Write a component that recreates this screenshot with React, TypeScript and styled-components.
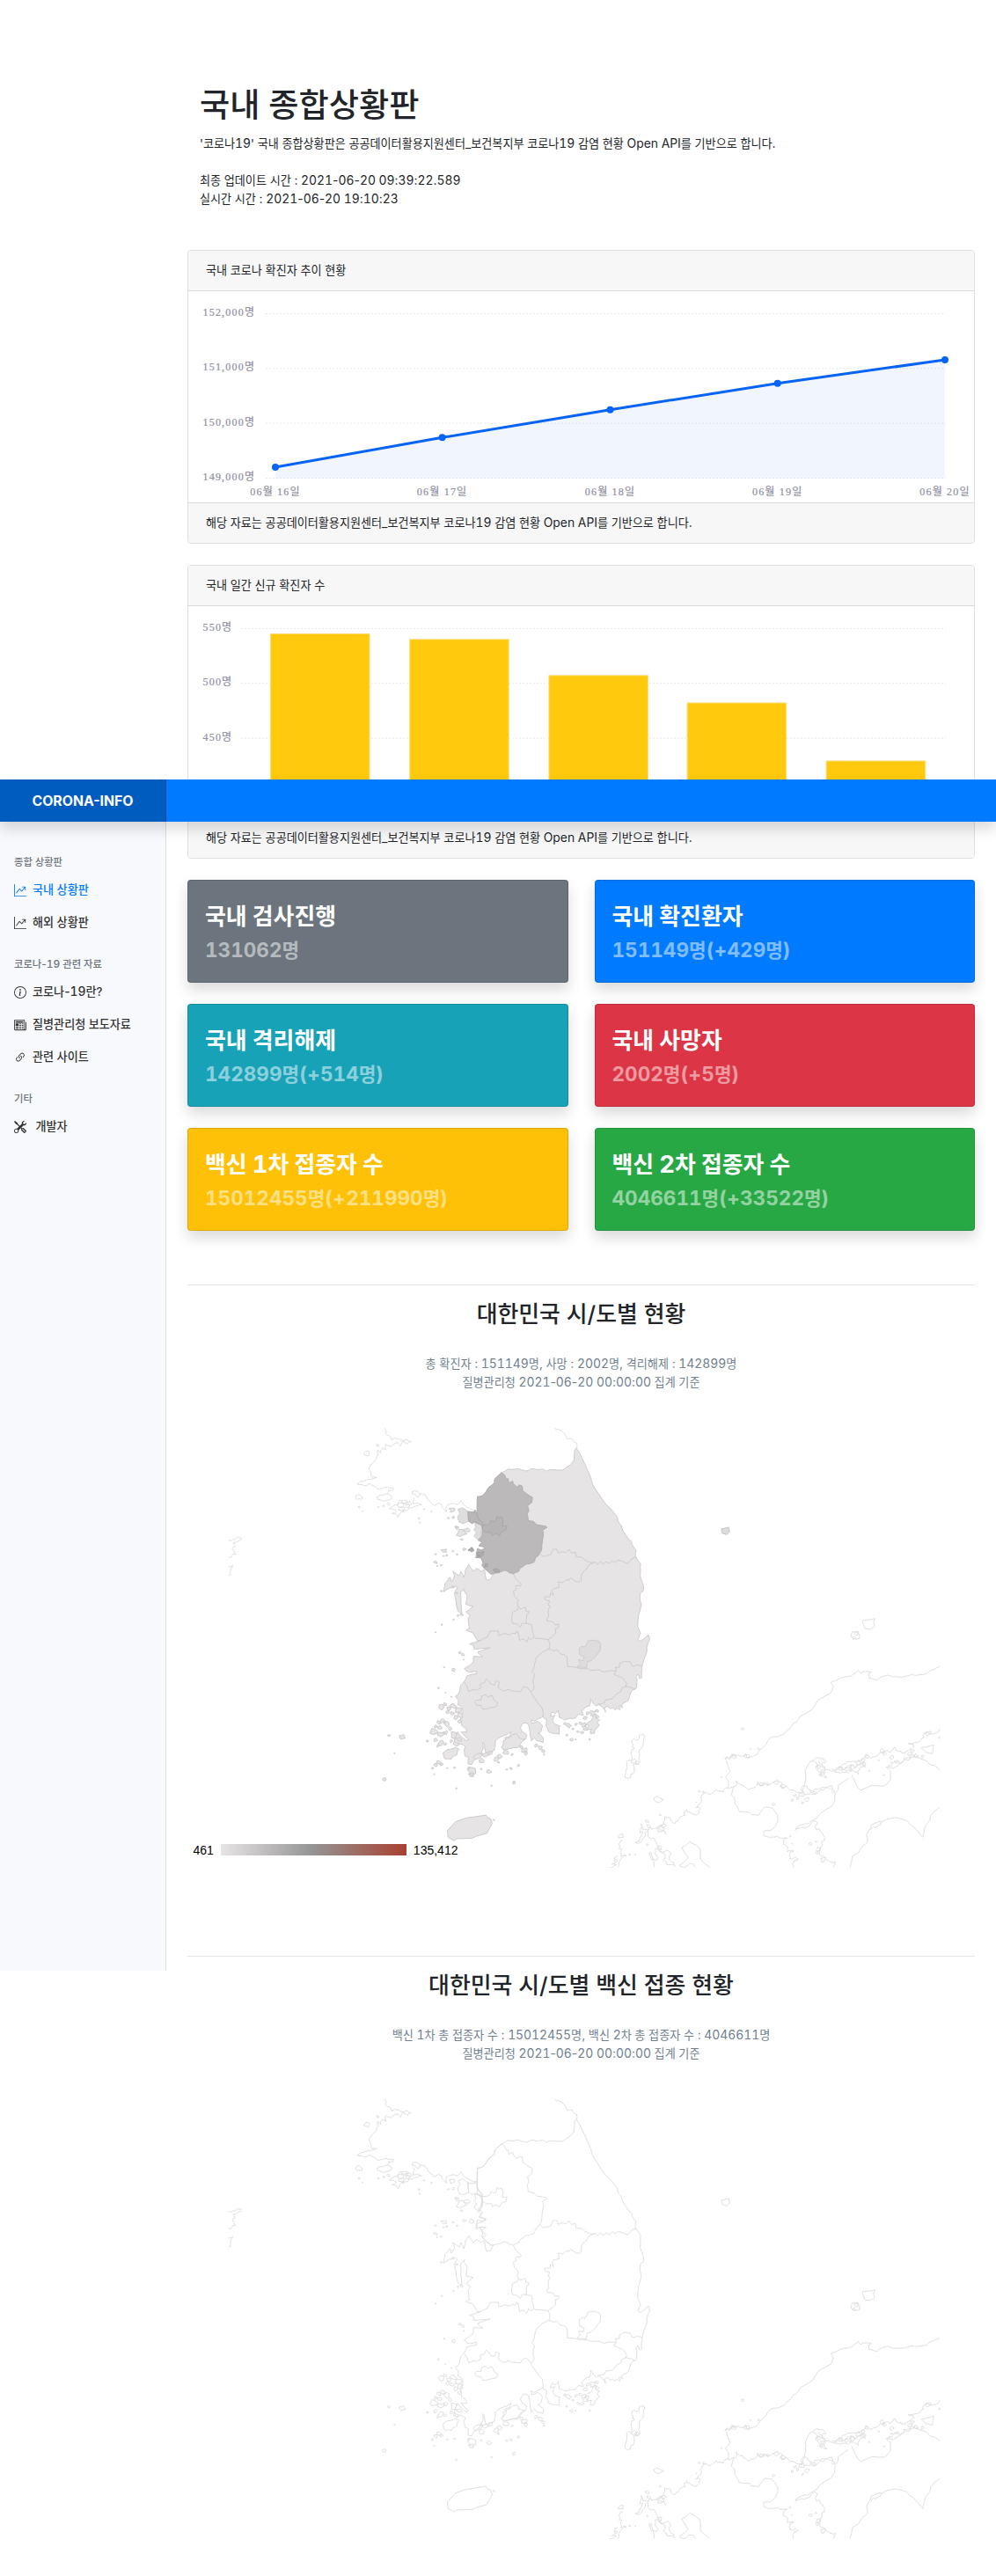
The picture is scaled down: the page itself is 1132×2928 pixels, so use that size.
import React from "react";
import styled, { createGlobalStyle } from "styled-components";
import { BsGraphUpArrow, BsInfoCircle, BsNewspaper, BsLink45Deg, BsTools } from "react-icons/bs";

const sans = `Inter, "Noto Sans CJK KR", sans-serif`;
const serif = `"Liberation Serif", "Noto Sans CJK KR", serif`;

const Global = createGlobalStyle`
  * { box-sizing: border-box; }
  body { margin: 0; background: #fff; color: #212529; font-family: ${sans}; font-size: 13.1px; line-height: 21px; }
`;

const Page = styled.div`
  position: relative;
  display: grid;
  grid-template-columns: 189px 1fr;
  height: 2928px;
  overflow: hidden;
`;

const NavBar = styled.header`
  position: absolute;
  top: 886px;
  left: 0;
  right: 0;
  height: 48px;
  display: flex;
  background: #007bff;
  box-shadow: 0 8px 16px rgba(0, 0, 0, 0.15);
`;
const Brand = styled.div`
  width: 189px;
  display: flex;
  align-items: center;
  justify-content: center;
  background: #005cbf;
  border-right: 1px solid #00458f;
  color: #fff;
  font-size: 15.8px;
  font-weight: 700;
`;

const SideBar = styled.aside`
  margin-top: 886px;
  height: 1354px;
  padding: 84px 0 0 16px;
  background: #f8f9fc;
  border-right: 1px solid #dcdddf;
`;
const SideGroup = styled.div`
  display: flex;
  flex-direction: column;
  margin-bottom: 19.5px;
`;
const SideTitle = styled.div`
  height: 22.5px;
  font-size: 11.3px;
  font-weight: 500;
  color: #6c757d;
`;
const SideItem = styled.a<{ $active?: boolean; $gap?: number }>`
  display: flex;
  align-items: center;
  gap: ${(p) => p.$gap ?? 7}px;
  height: 37px;
  color: ${(p) => (p.$active ? "#007bff" : "#333")};
  font-weight: 500;
  svg { width: 14px; height: 14px; position: relative; top: 1px; }
`;

const Latin = styled.span<{ $digits?: boolean }>`
  font-size: 1.06em;
  line-height: 1;
  font-variant-numeric: ${(p) => (p.$digits ? "tabular-nums" : "normal")};
`;

const Main = styled.main`
  padding: 98px 24px 0;
`;
const Intro = styled.section`
  height: 186px;
  padding-left: 14px;
`;
const Title = styled.h1`
  margin: 0 0 10.5px;
  font-size: 37.2px;
  line-height: 44px;
  font-weight: 500;
`;
const Text = styled.p`
  margin: 0;
`;
const Card = styled.section`
  height: 334px;
  margin-bottom: 24px;
  border: 1px solid #dfdfdf;
  border-radius: 4px;
  overflow: hidden;
`;
const Bar = styled.div<{ $foot?: boolean }>`
  height: 46px;
  padding: 0 20px;
  display: flex;
  align-items: center;
  background: #f7f7f7;
  border: 0 solid #dadada;
  border-width: ${(p) => (p.$foot ? "1px 0 0" : "0 0 1px")};
`;
const Chart = styled.svg`
  display: block;
  width: 893px;
  height: 240px;
  text {
    font: 400 12px ${serif};
    fill: #8f8fa3;
    stroke: #8f8fa3;
    stroke-width: 0.2px;
    letter-spacing: 1.2px;
  }
`;

const Stats = styled.section`
  display: grid;
  grid-template-columns: 1fr 1fr;
  gap: 24px 30px;
`;
const Stat = styled.article<{ $bg: string }>`
  height: 117px;
  padding: 22px 19px;
  background: ${(p) => p.$bg};
  border: 1px solid rgba(0, 0, 0, 0.125);
  border-radius: 4px;
  box-shadow: 0 8px 16px rgba(0, 0, 0, 0.15);
  font-weight: 700;
`;
const StatName = styled.div`
  font-size: 25.9px;
  line-height: 38px;
  color: #fff;
`;
const StatValue = styled.div`
  font-size: 21.3px;
  line-height: 38px;
  color: rgba(255, 255, 255, 0.5);
`;

const Region = styled.section`
  height: 763px;
  padding-top: 17px;
  border-top: 1px solid #e5e5e5;
  text-align: center;
`;
const Regions = styled.div`
  margin-top: 61px;
`;
const RegionTitle = styled.h2`
  margin: 0 0 30.5px;
  font-size: 25.9px;
  line-height: 31px;
  font-weight: 500;
`;
const Muted = styled.p`
  margin: 0;
  color: #708090;
`;
const MapBox = styled.div`
  position: relative;
  height: 500px;
  margin-top: 41px;
  padding-left: 45.5px;
`;
const MapSvg = styled.svg`
  display: block;
`;
const Legend = styled.div`
  position: absolute;
  left: 6.5px;
  bottom: 10px;
  display: flex;
  align-items: center;
  gap: 8px;
  font: 14px/20px "Liberation Sans", sans-serif;
  color: #000;
`;
const Ramp = styled.div`
  width: 211px;
  height: 13px;
  background: linear-gradient(90deg, #e7e4e6, #949393 50%, #a94131);
`;

/* Latin letters and digits are set a little larger than the Hangul around them. */
const mix = (text: string) =>
  text
    .split(/(\d+|[A-Za-z()+:,._\-]+)/)
    .map((part, i) => (i % 2 ? <Latin key={i} $digits={/\d/.test(part)}>{part}</Latin> : part));

type Pt = [number, number];

const parse = (s: string): Pt[] =>
  s.trim().split(/\s+/).map((p) => p.split(",").map(Number) as Pt);

const noise = (n: number) => {
  const v = Math.sin(n * 127.1 + 11.7) * 43758.5453;
  return v - Math.floor(v) - 0.5;
};

/* Subdivides a coastline and shifts each midpoint sideways, so it looks eroded. */
const line = (s: string, amp = 0, close = false) => {
  let pts = parse(s);
  if (close) pts.push(pts[0]);
  for (let round = 0; amp > 0 && round < 2; round++) {
    const out: Pt[] = [pts[0]];
    for (let i = 1; i < pts.length; i++) {
      const [x0, y0] = pts[i - 1];
      const [x1, y1] = pts[i];
      const len = Math.hypot(x1 - x0, y1 - y0) || 1;
      const d = noise(x0 + y1 * 3 + round) * Math.min(amp, len * 0.8);
      out.push([(x0 + x1) / 2 - ((y1 - y0) / len) * d, (y0 + y1) / 2 + ((x1 - x0) / len) * d]);
      out.push([x1, y1]);
    }
    pts = out;
    amp /= 2;
  }
  return "M" + pts.map(([x, y]) => `${x.toFixed(1)} ${y.toFixed(1)}`).join("L") + (close ? "Z" : "");
};

const isles = (s: string) =>
  s.trim().split(/\s+/).map((item) => {
    const [x, y, r] = item.split(",").map(Number);
    const n = r > 5 ? 9 : 6;
    return (
      "M" +
      Array.from({ length: n }, (_, i) => {
        const a = (i / n) * Math.PI * 2;
        const q = r * (1 + noise(x * 3 + y + i * 7) * 0.9);
        return `${(x + Math.cos(a) * q).toFixed(1)} ${(y + Math.sin(a) * q * 0.85).toFixed(1)}`;
      }).join("L") +
      "Z"
    );
  }).join("");

const mainland = `1272,133 1283,150 1320,235 1325,254 1366,318 1404,362 1406,375 1416,388 1420,404 1440,436 1447,440 1450,452 1463,470 1461,490 1477,515 1476,557 1486,587 1485,606 1477,610 1475,622 1480,650 1470,690 1468,724 1477,746 1468,765 1478,770 1502,750 1506,765 1497,790 1497,806 1482,853 1480,893 1473,893 1468,880 1462,890 1466,895 1465,925 1450,934 1446,940 1438,966 1415,982 1420,990 1408,985 1412,997 1400,990 1396,998 1388,990 1380,994 1370,985 1362,990 1365,1005 1358,990 1350,985 1345,978 1335,985 1325,975 1318,962 1315,985 1300,990 1290,1000 1296,1015 1280,1012 1270,1025 1250,1025 1235,1030 1218,1022 1215,998 1205,1010 1195,1005 1190,1020 1205,1015 1198,1032 1205,1045 1220,1050 1218,1077 1200,1076 1185,1070 1176,1050 1178,1030 1166,1020 1140,1035 1128,1030 1130,1042 1150,1035 1165,1050 1160,1070 1150,1075 1168,1090 1168,1105 1150,1100 1140,1090 1130,1100 1125,1070 1120,1045 1105,1040 1095,1055 1100,1070 1115,1080 1110,1095 1098,1100 1085,1120 1060,1125 1045,1130 1035,1120 1050,1100 1045,1090 1060,1085 1065,1070 1050,1080 1035,1085 1015,1100 1012,1130 985,1140 980,1110 975,1105 975,1130 965,1150 945,1165 940,1178 928,1175 930,1155 918,1150 915,1130 920,1118 905,1110 890,1115 885,1095 895,1070 905,1085 925,1100 930,1095 915,1080 905,1070 925,1070 918,1055 908,1050 905,1020 912,1000 905,985 895,980 898,965 888,952 900,940 905,915 915,905 925,885 955,878 955,870 930,873 916,862 945,840 947,820 975,822 958,808 998,792 947,797 944,783 933,780 965,770 955,765 945,745 922,735 932,730 928,695 935,685 922,675 945,655 922,650 925,620 915,605 918,597 905,610 905,640 908,680 895,670 890,640 885,610 895,595 885,592 870,595 850,608 855,580 870,560 875,575 885,555 880,540 900,555 905,540 915,560 920,535 930,517 945,540 955,530 970,540 980,535 988,570 998,568 1010,548 1000,548 980,530 972,522 985,515 970,500 985,490 955,490 958,478 985,465 965,455 975,440 960,430 970,415 975,400 965,385 957,378 958,345 958,294 975,290 995,262 1012,248 1014,234 1034,215 1055,203 1065,205 1090,202 1110,209 1130,202 1150,205 1165,202 1175,209 1190,204 1230,206 1250,192 1264,177 1267,140`;

const gyeonggi = `1034,215 1045,222 1050,235 1056,234 1058,248 1070,242 1073,252 1085,262 1090,255 1100,258 1103,275 1118,287 1132,295 1132,312 1118,322 1122,340 1116,352 1120,372 1135,375 1148,387 1175,391 1180,396 1165,405 1168,420 1164,445 1162,470 1152,488 1142,497 1138,510 1125,515 1110,518 1095,530 1090,540 1072,549 1060,545 1045,537 1030,543 1010,548 1000,549 980,531 972,518 975,512 968,492 953,496 958,465 970,470 985,462 962,456 972,445 960,438 972,425 975,400 972,385 957,362 958,294 975,290 995,262 1012,248 1014,234`;

const borders = [
  "1157,480 1165,491 1180,488 1190,487 1198,468 1210,467 1215,480 1230,475 1240,478 1250,468 1258,480 1270,478 1272,492 1288,493 1300,503 1318,512 1335,510 1340,518 1350,508 1358,517 1368,508 1378,515 1388,505 1396,512 1405,503 1420,507 1435,515 1448,500 1463,494",
  "1328,512 1310,522 1308,530 1290,548 1288,572 1275,576 1255,562 1250,570 1240,568 1230,577 1215,575 1218,593 1200,597 1195,605 1200,620 1190,612 1188,625 1172,625 1172,633 1187,638 1182,652 1190,655 1183,670 1185,690 1178,697 1180,705 1198,707 1205,717 1217,715 1215,727 1205,730 1207,745 1195,757 1183,765",
  "1072,549 1080,565 1097,582 1095,588 1080,588 1082,600 1072,605 1075,622 1088,635 1085,645 1088,658",
  "1088,658 1095,665 1110,658 1112,672 1122,673 1115,685 1113,712 1100,712 1095,725 1085,715 1070,712 1066,700 1070,675 1085,668 1088,658",
  "1113,712 1130,715 1132,735 1138,755 1130,765 1120,758 1115,773 1105,763 1092,768 1088,745 1085,740",
  "955,770 970,768 990,757 998,738 1025,737 1027,752 1045,745 1060,750 1068,744 1080,746 1082,738 1088,742",
  "1138,760 1150,762 1183,765 1189,780 1185,797 1165,807 1145,825 1140,845 1136,865 1130,870 1140,880 1135,905 1138,925 1130,938",
  "915,905 925,920 930,937 945,930 955,933 968,925 967,912 980,908 985,895 997,905 1000,913 1012,916 1018,900 1027,905 1025,925 1040,935 1058,930 1070,935 1095,937 1105,922 1118,925 1130,942 1137,955 1165,993 1167,1020",
  "1185,797 1200,803 1212,800 1222,812 1235,815 1243,825 1245,855 1270,857 1285,862 1308,862 1320,867 1345,865 1358,872 1380,868 1400,870",
  "1395,857 1410,857 1410,845 1425,837 1445,840 1450,853 1465,850 1482,853",
  "1398,857 1400,870 1392,880 1420,893 1433,912 1428,920 1450,925 1460,930",
  "1433,918 1418,925 1415,937 1400,945 1388,960 1365,965 1362,975 1340,980",
  "950,972 955,965 970,965 972,952 985,948 990,955 1005,950 1010,965 1022,972 1018,987 995,992 975,995 968,982 955,982 950,972",
];

const seoul = "972,387 985,388 998,382 1000,372 1012,377 1018,374 1020,358 1025,364 1035,360 1040,375 1037,390 1052,390 1048,405 1035,410 1028,423 1018,415 1005,422 1003,412 985,412 975,405";
const incheon = "928,343 948,345 950,338 957,352 962,368 974,378 975,390 950,378 940,383 930,375";
const ganghwa = "896,335 910,330 928,342 930,375 915,383 900,378 895,360 903,350";
const yeongjong = "950,378 968,384 972,395 970,425 962,437 948,425 955,412 946,403 953,396";
const daegu = "1275,857 1285,845 1280,832 1295,835 1298,822 1283,815 1282,795 1290,788 1300,790 1310,770 1330,767 1345,772 1350,780 1347,805 1335,820 1320,835 1308,838 1305,858";
const jeju = "862,1397 888,1367 920,1355 985,1345 990,1353 1000,1357 1005,1372 988,1405 953,1415 942,1421 890,1423 884,1430 865,1418";
const geoje = "1325,1018 1335,1010 1335,1025 1348,1030 1338,1040 1346,1048 1332,1062 1330,1075 1318,1076 1322,1062 1305,1060 1312,1048 1300,1050 1318,1035";
const jindo = "848,1140 870,1128 890,1120 900,1128 893,1145 875,1160 858,1160 850,1152";
const goheung = "1040,1100 1065,1085 1082,1075 1090,1090 1110,1095 1098,1105 1085,1122 1060,1125 1045,1130 1035,1120";

const westIsles = `878,337,8 882,362,4 890,395,4 866,364,3 908,416,13 925,405,8 908,435,4 895,398,5 938,468,8 916,467,5 852,472,7 880,474,3 893,484,3 860,488,3 825,484,3 850,490,3 825,510,5 842,520,3 830,522,2 843,606,3 893,612,3 880,592,4 908,684,4 896,686,3 882,700,2 845,716,2 825,741,2 902,808,4 912,815,5 914,832,2 883,866,6 852,857,2 833,926,3 856,941,2 875,955,2
842,988,8 855,980,6 868,992,7 882,986,8 895,998,9 878,1008,6 903,1015,8 862,1005,5 890,1022,8 902,1035,6 835,1040,7 848,1034,8 860,1045,8 825,1052,5 838,1055,6 820,1070,12 842,1078,9 858,1072,6 870,1060,6 798,1101,4 825,1097,6 842,1108,8 855,1110,5 832,1116,4 882,1080,10 900,1095,9 890,1110,8 875,1100,5
720,1086,8 677,1082,4 694,1140,2 661,1227,5 890,1257,3 815,1190,3 825,1180,5 835,1172,7 842,1178,5 820,1210,2 862,1190,2 885,1188,3 940,1200,14 938,1212,8 930,1190,3 995,1202,7 1003,1248,2 1075,1238,5 970,1193,3 1052,1195,3 1065,1190,5 1088,1180,4
960,1150,12 985,1145,9 970,1165,8 1000,1140,7 1018,1160,8 1030,1152,7 1048,1137,9 1025,1170,4 1068,1145,4 1105,1130,9 1112,1140,6 1098,1120,6 1145,1115,5 1158,1125,7 1168,1135,5 1170,1145,2
1235,1043,4 1248,1050,7 1262,1060,3 1272,1045,5 1285,1042,5 1296,1048,7 1302,1060,7 1278,1070,4 1292,1072,5 1256,1096,5 1242,1080,3 1270,1095,2 1315,1095,3 1300,1025,6 1325,1008,9 1338,1000,5 1308,1010,5 1338,1020,5 1010,1361,3`;

const northCoast = [
  "663,67 669,78 665,85 680,95 685,108 695,100 715,108 735,105 747,112 735,120 722,110 712,127 705,115 690,122 680,128 665,122 668,140 655,133 650,150 640,140 642,155 635,172 612,200 620,228 638,230 600,240 575,252 605,258 615,250 640,268 665,262 690,265 690,272 675,272 672,285 685,292 682,302 660,308 640,303 637,295 655,290 672,285",
  "750,278 765,276 777,288 770,296 750,285 750,278",
  "777,282 790,286 800,304 820,322 835,315 845,322 850,335 858,345 862,322 880,316 895,320 906,306 912,318 945,340 958,342",
  "757,297 752,318 770,316 780,322 762,325 750,330 740,328 735,340 720,345 722,335 705,362 698,352 685,350 700,340 678,335 690,325 705,322 712,305 730,318 740,308",
  "1203,67 1208,73 1222,75 1240,95 1245,105 1258,102 1275,118 1275,135",
];
const farWest = [
  "165,437 180,435 195,428 206,430 203,437 180,447 187,458 178,465 188,485 178,487 175,494 165,493",
  "165,525 180,520 173,535 172,553 166,553",
];
const northIsles = "607,153,9 640,125,4 580,296,9 582,328,3 592,342,2 642,328,3 660,325,3 675,318,4 715,320,9 725,310,7 718,335,8 735,325,7 742,316,6 788,335,2 812,343,2 772,366,3 774,379,2";

const japanSmooth = [
  "1103,643 1070,657 1055,668 1018,673 1010,670 970,679 945,678 925,672 900,680 888,690 862,682 860,668 870,662 845,660 832,665 825,656 815,665 800,675 770,680 750,690 732,697 740,710 732,732 688,757 667,790 627,813 613,835 605,835 593,853 580,862 572,873 555,881 530,883 515,897 513,905 492,925 480,942 465,950",
  "375,962 380,980 388,1000 372,1020 383,1035 383,1058",
  "1103,995 1085,980 1065,975 1060,965 1040,958 1015,950 990,955 975,970 945,990 920,985 935,1000 935,1028 915,1050 870,1048 833,1065 820,1050 803,1013",
  "790,1025 757,1047 755,1065 745,1080 743,1105 735,1118 700,1140 685,1158 660,1172",
  "797,1328 805,1290 825,1278 840,1255 858,1240 853,1215 868,1190",
  "905,1173 925,1163 955,1158 990,1168 1000,1180 1012,1187 1045,1225 1052,1190 1070,1165 1072,1150 1085,1135 1103,1122",
  "400,1052 392,1080 403,1090 405,1110 420,1137 455,1140 460,1147 485,1150 505,1122 530,1125 550,1150 550,1170 540,1190 523,1203 503,1203 503,1220 525,1225 550,1222 560,1228 583,1228",
  "215,1322 245,1295 223,1260 240,1250 250,1240 270,1250 285,1262 287,1300 305,1318 320,1328",
  "215,1322 232,1328 250,1315 262,1315 270,1328",
  "1040,920 1082,910 1078,940 1055,935 1040,920",
];
const japanRough = [
  "465,950 450,955 440,940 430,948 400,948 385,960 370,960 385,955 395,940 408,945",
  "383,1058 400,1052 408,1032 430,1045 450,1063 472,1055 482,1035 490,1050 505,1038 515,1048 550,1030 565,1040 558,1052 580,1050 610,1068 630,1078 640,1055 645,1020 650,985 680,955 705,957 712,970 700,985 720,995 745,1000 770,978 790,967 830,965 855,945 870,955 900,935 920,930 935,935 950,918 970,930 985,940 1000,925 1015,915 1010,905 995,905 1030,900 1048,885 1050,870 1070,872 1103,855",
  "660,1172 640,1180 610,1202 640,1193 670,1170 685,1180 682,1200 700,1208 712,1225 700,1240 695,1265 700,1290 715,1300 748,1310 740,1328",
  "868,1190 880,1178 905,1173 890,1188 868,1200",
  "583,1228 570,1250 585,1258 583,1275 605,1272 590,1290 600,1300 620,1300 600,1315 600,1328",
  "383,1058 365,1070 340,1062 325,1075 300,1073 290,1085 290,1105 270,1125 285,1125 280,1143 255,1143 240,1130 235,1150 215,1160 200,1178 185,1160 165,1155 160,1180 145,1190 150,1200 170,1217",
  "150,1190 130,1195 115,1193 105,1182 110,1200 95,1225 85,1240 65,1243 80,1225 90,1205 80,1210 83,1180 90,1198 115,1190",
  "108,1205 118,1230 135,1240 145,1260 150,1275 170,1270 185,1285 183,1305 200,1325 175,1320 160,1300 160,1280 135,1262 130,1280 140,1300 125,1300 120,1285 130,1328",
  "22,1235 10,1265 20,1265 15,1290 35,1288 15,1300 5,1328",
  "5,1290 -8,1305 5,1305 -15,1318 0,1320 -25,1328",
  "90,873 96,885 92,910 78,930 75,955 80,970 65,975 60,990 50,1010 38,1025 29,1018 35,968 50,965 52,930 62,920 53,905 60,890 78,888 80,875 90,873",
  "672,962 690,980 680,990 700,1005 695,1015 718,1020 705,1000 710,985 690,965",
  "735,992 760,985 775,995 800,980 820,985 840,970 850,985 830,990 825,1010 800,1000 780,1003 745,1003",
  "940,985 935,970 955,965 965,975 980,955 1000,960 1010,945 1030,950",
  "630,1060 650,1052 665,1065 660,1078 640,1078 630,1060",
  "660,1075 680,1060 700,1055 735,1050 738,1060 715,1055 690,1068 665,1078",
];
const japanIsles = `862,493,20 815,537,16 820,530,6 810,545,5 430,857,5 458,923,2 485,923,3 400,948,8 445,948,8 142,1097,14 283,1069,3 297,1070,3 358,1020,2 273,1105,2 535,1112,4 106,1170,6 15,1220,8 65,1284,2 45,1285,3 150,1148,3 60,967,8 70,970,6 150,1195,12 160,1185,8 148,1262,7 115,1280,5 105,1250,4 632,1080,7 610,1083,5 600,1098,4 650,1097,7 635,1108,4 618,1092,5 675,1072,5 740,1068,6 765,990,8 790,990,10 805,985,8 825,972,9 845,975,8 840,962,7 855,950,7 690,985,7 705,1000,8 697,1012,5 862,998,2 913,1013,2 938,952,6 955,968,4 905,930,8 915,940,6 930,982,4 895,962,2 1000,940,7 1022,948,6 1045,950,5 1010,930,6 600,1247,2 663,1248,5 690,1265,8 685,1278,5 705,1300,8 680,1240,3 593,1222,2 545,1040,6 570,1050,8 495,1045,8 515,1042,5 1065,870,8 1102,885,3`;

const KoreaMap = ({ filled }: { filled?: boolean }) => {
  const land = filled ? "#e6e4e5" : "none";
  const edge = filled ? "#cdcbcc" : "#dfdfdf";
  const coast = "#dfdfdf";
  const shape = (d: string, fill: string, key: string, stroke = edge) => (
    <path key={key} d={d} fill={filled ? fill : "none"} stroke={stroke} vectorEffect="non-scaling-stroke" />
  );
  return (
    <MapSvg width="810" height="500" viewBox="0 0 810 500" strokeWidth="1" strokeLinejoin="round">
      <g transform="translate(-58.5 -23) scale(0.35714 0.34436)">
        {[...northCoast, ...farWest].map((s, i) => shape(line(s, 6), "none", "n" + i, coast))}
        {shape(isles(northIsles), "none", "ni", coast)}
        {shape(line(mainland, 3, true), land, "main")}
        {shape(isles(westIsles), land, "isles")}
        {[jeju, geoje, jindo, goheung].map((s, i) => shape(line(s, i ? 6 : 0, true), land, "j" + i))}
        {borders.map((s, i) => shape(line(s, 2), "none", "b" + i))}
        {shape(line(daegu, 2, true), "#dedcdd", "daegu")}
        {shape(line(ganghwa, 2, true), "#dfdddd", "gh")}
        {shape(line(yeongjong, 2, true), "#dfdddd", "yj")}
        {shape(line(gyeonggi, 2, true), "#bbb9ba", "gg", filled ? "#b0aeaf" : edge)}
        {shape(line(incheon, 1, true), "#b8b6b7", "ic", filled ? "#a9a7a8" : edge)}
        {shape(line(seoul, 1, true), "#b6b4b5", "seoul", filled ? "#a9a7a8" : edge)}
        {filled && shape(isles("938,469,7 968,482,9 962,492,5 1018,537,8 985,520,6"), "#aeacad", "gi", "#a4a2a3")}
      </g>
      <g transform="translate(441.5 57) scale(0.33333)">
        {shape("M358 174L383 168L386 184L376 193L361 188Z", "#dddbdc", "ul", filled ? "#c6c4c5" : edge)}
        {japanSmooth.map((s, i) => shape(line(s, 2), "none", "s" + i, coast))}
        {japanRough.map((s, i) => shape(line(s, 14), "none", "r" + i, coast))}
        {shape(isles(japanIsles), "none", "ji", coast)}
      </g>
    </MapSvg>
  );
};

const Source = "해당 자료는 공공데이터활용지원센터_보건복지부 코로나19 감염 현황 Open API를 기반으로 합니다.";

const trend = [
  { x: 99, y: 200, label: "06월 16일" },
  { x: 288.6, y: 166.3, label: "06월 17일" },
  { x: 479.5, y: 134.7, label: "06월 18일" },
  { x: 669.7, y: 104.7, label: "06월 19일" },
  { x: 860, y: 78, label: "06월 20일" },
];
const daily = [
  { x: 93, y: 389 },
  { x: 251.2, y: 395.3 },
  { x: 409.4, y: 436.3 },
  { x: 566.6, y: 467.5 },
  { x: 724.6, y: 533.5 },
];

const Grid = ({ from, labels }: { from: number; labels: string[] }) => (
  <>
    {labels.map((t, i) => (
      <g key={t}>
        <line x1={from} x2={861} y1={25.5 + i * 62.3} y2={25.5 + i * 62.3} stroke="#e6e6f0" strokeDasharray="2 2" />
        <text x={16.5} y={28 + i * 62.3}>{t}</text>
      </g>
    ))}
  </>
);

const stats = [
  ["국내 검사진행", "131062명", "#6c757d"],
  ["국내 확진환자", "151149명(+429명)", "#007bff"],
  ["국내 격리해제", "142899명(+514명)", "#17a2b8"],
  ["국내 사망자", "2002명(+5명)", "#dc3545"],
  ["백신 1차 접종자 수", "15012455명(+211990명)", "#ffc107"],
  ["백신 2차 접종자 수", "4046611명(+33522명)", "#28a745"],
];

export default function App() {
  return (
    <>
      <Global />
      <Page>
        <SideBar>
          <SideGroup>
            <SideTitle>종합 상황판</SideTitle>
            <SideItem $active><BsGraphUpArrow /><span>국내 상황판</span></SideItem>
            <SideItem><BsGraphUpArrow /><span>해외 상황판</span></SideItem>
          </SideGroup>
          <SideGroup>
            <SideTitle>{mix("코로나-19 관련 자료")}</SideTitle>
            <SideItem><BsInfoCircle /><span>{mix("코로나-19란?")}</span></SideItem>
            <SideItem><BsNewspaper /><span>질병관리청 보도자료</span></SideItem>
            <SideItem><BsLink45Deg /><span>관련 사이트</span></SideItem>
          </SideGroup>
          <SideGroup>
            <SideTitle>기타</SideTitle>
            <SideItem $gap={10.5}><BsTools /><span>개발자</span></SideItem>
          </SideGroup>
        </SideBar>
        <Main>
          <Intro>
            <Title>국내 종합상황판</Title>
            <Text>
              {mix("'코로나19' 국내 종합상황판은 공공데이터활용지원센터_보건복지부 코로나19 감염 현황 Open API를 기반으로 합니다.")}
              <br /><br />
              {mix("최종 업데이트 시간 : 2021-06-20 09:39:22.589")}
              <br />
              {mix("실시간 시간 : 2021-06-20 19:10:23")}
            </Text>
          </Intro>
          <Card>
            <Bar>국내 코로나 확진자 추이 현황</Bar>
            <Chart viewBox="0 0 893 240">
              <Grid from={88} labels={["152,000명", "151,000명", "150,000명", "149,000명"]} />
              <polygon
                points={`99,212.5 ${trend.map((p) => `${p.x},${p.y}`).join(" ")} 860,212.5`}
                fill="rgba(0,98,245,0.055)"
              />
              <polyline points={trend.map((p) => `${p.x},${p.y}`).join(" ")} fill="none" stroke="#0563f5" strokeWidth="3" />
              {trend.map((p) => (
                <g key={p.label}>
                  <circle cx={p.x} cy={p.y} r="4" fill="#0563f5" />
                  <text x={p.x} y={232} textAnchor="middle">{p.label}</text>
                </g>
              ))}
            </Chart>
            <Bar $foot><span>{mix(Source)}</span></Bar>
          </Card>
          <Card>
            <Bar>국내 일간 신규 확진자 수</Bar>
            <Chart viewBox="0 0 893 240">
              <Grid from={60} labels={["550명", "500명", "450명", "400명"]} />
              {daily.map((b) => (
                <rect key={b.x} x={b.x + 0.5} y={b.y - 357.5} width="112.5" height={570 - b.y} fill="#ffc90e" stroke="#ffdc73" />
              ))}
            </Chart>
            <Bar $foot><span>{mix(Source)}</span></Bar>
          </Card>
          <Stats>
            {stats.map(([name, value, bg]) => (
              <Stat key={name} $bg={bg}>
                <StatName>{mix(name)}</StatName>
                <StatValue>{mix(value)}</StatValue>
              </Stat>
            ))}
          </Stats>
          <Regions>
            <Region>
              <RegionTitle>대한민국 시/도별 현황</RegionTitle>
              <Muted>{mix("총 확진자 : 151149명, 사망 : 2002명, 격리해제 : 142899명")}</Muted>
              <Muted>{mix("질병관리청 2021-06-20 00:00:00 집계 기준")}</Muted>
              <MapBox>
                <KoreaMap filled />
                <Legend>461<Ramp />135,412</Legend>
              </MapBox>
            </Region>
            <Region>
              <RegionTitle>대한민국 시/도별 백신 접종 현황</RegionTitle>
              <Muted>{mix("백신 1차 총 접종자 수 : 15012455명, 백신 2차 총 접종자 수 : 4046611명")}</Muted>
              <Muted>{mix("질병관리청 2021-06-20 00:00:00 집계 기준")}</Muted>
              <MapBox>
                <KoreaMap />
              </MapBox>
            </Region>
          </Regions>
        </Main>
        <NavBar>
          <Brand>CORONA-INFO</Brand>
        </NavBar>
      </Page>
    </>
  );
}
